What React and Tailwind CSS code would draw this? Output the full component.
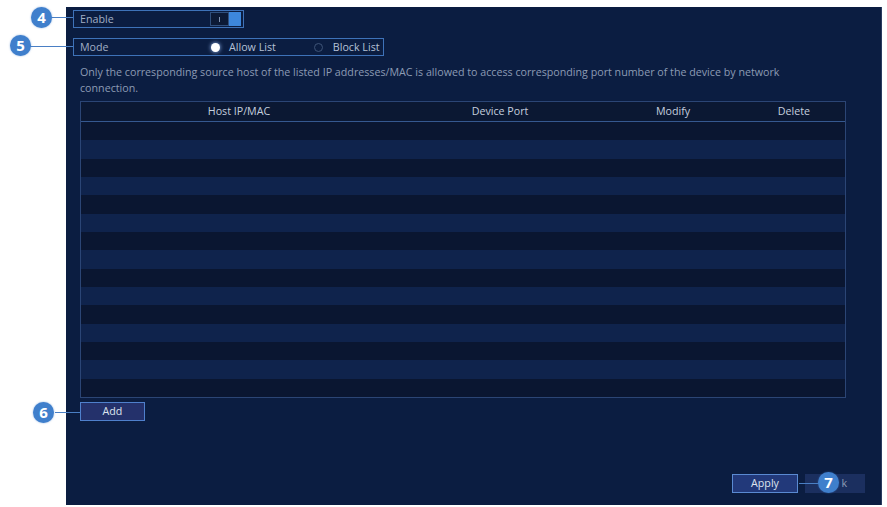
import React from "react";

function Badge({ n, className }) {
  return (
    <div
      className={
        "absolute w-[21px] h-[21px] rounded-full bg-[#3f7fcc] flex items-center justify-center text-white font-bold text-[15px] leading-none shadow-[0_0_2px_rgba(60,120,200,0.6)] " +
        className
      }
      style={{ fontFamily: "'Open Sans', 'Liberation Sans', sans-serif" }}
    >
      {n}
    </div>
  );
}

export default function App() {
  const rows = Array.from({ length: 15 }, (_, i) => i);
  return (
    <div
      className="relative w-[887px] h-[507px] bg-white overflow-hidden pl-[66px] pt-[7px]"
      style={{ fontFamily: "'Open Sans', 'Noto Sans', sans-serif" }}
    >
      <div className="w-[816px] h-[498px] bg-[#0b1d41] flex flex-col pt-[3px] border-r border-[#2a3c60]">
        {/* Enable row */}
        <div className="ml-[7px] w-[171px] h-[18px] border border-[#3e72b8] flex items-center pl-[6px] text-[10.7px] text-[#a0aec4]">
          <span className="flex-1">Enable</span>
          <div className="flex items-center h-[14px] mr-[2px]">
            <div className="w-[19px] h-[14px] bg-[#0c1a36] border border-[#30507e] flex items-center justify-center">
              <div className="w-[1px] h-[5px] bg-[#7d8fae]" />
            </div>
            <div className="w-[12px] h-[14px] bg-[#3d87dc]" />
          </div>
        </div>

        {/* Mode row */}
        <div className="ml-[7px] mt-[10px] w-[311px] h-[18px] border border-[#3e72b8] flex items-center pl-[6px] text-[10.7px]">
          <span className="w-[131px] text-[#a0aec4]">Mode</span>
          <div className="w-[9px] h-[9px] rounded-full bg-white shadow-[0_0_4px_#9cc3ff]" />
          <span className="ml-[9px] text-[#b4c1d6]">Allow List</span>
          <div className="ml-[38px] w-[9px] h-[9px] rounded-full border border-[#3e5478]" />
          <span className="ml-[10px] text-[#b4c1d6]">Block List</span>
        </div>

        {/* Description */}
        <div className="ml-[14px] mt-[8px] text-[10.7px] leading-[16px] text-[#8c9bb4] whitespace-nowrap">
          Only the corresponding source host of the listed IP addresses/MAC is allowed to access corresponding port number of the device by network
          <br />
          connection.
        </div>

        {/* Table */}
        <div className="ml-[14px] mt-[5px] w-[766px] h-[297px] border border-[#2b4575] flex flex-col">
          <div className="h-[20px] shrink-0 bg-[#0b1833] border-b border-[#35588f] flex items-center text-[10.7px] text-[#c4cede]">
            <div className="w-[316px] text-center">Host IP/MAC</div>
            <div className="w-[206px] text-center">Device Port</div>
            <div className="w-[140px] text-center">Modify</div>
            <div className="flex-1 text-center">Delete</div>
          </div>
          <div className="flex-1 flex flex-col">
            {rows.map((i) => (
              <div
                key={i}
                className={"flex-1 " + (i % 2 === 0 ? "bg-[#0a1631]" : "bg-[#0f234c]")}
              />
            ))}
          </div>
        </div>

        {/* Add */}
        <div className="ml-[14px] mt-[4px] w-[65px] h-[19px] bg-[#24316b] border border-[#4f80cc] flex items-center justify-center text-[10.7px] text-[#dde4ef]">
          Add
        </div>

        {/* Bottom buttons */}
        <div className="mt-auto pb-[12px] flex justify-end gap-[7px] pr-[16px]">
          <div className="w-[66px] h-[19px] bg-[#22397a] border border-[#5a8ad2] flex items-center justify-center text-[10.7px] text-[#dde4ef]">
            Apply
          </div>
          <div className="w-[60px] h-[19px] bg-[#1b2f5f] flex items-center justify-end pr-[18px] text-[10.7px] text-[#8e9db6]">
            k
          </div>
        </div>
      </div>

      {/* Callouts */}
      <div className="absolute left-[51px] top-[17px] w-[22px] h-[1px] bg-[#4a7fc4]" />
      <Badge n="4" className="left-[31px] top-[7px]" />
      <div className="absolute left-[30px] top-[46px] w-[43px] h-[1px] bg-[#4a7fc4]" />
      <Badge n="5" className="left-[10px] top-[35px]" />
      <div className="absolute left-[55px] top-[412px] w-[25px] h-[1px] bg-[#4a7fc4]" />
      <Badge n="6" className="left-[33px] top-[402px]" />
      <div className="absolute left-[799px] top-[483px] w-[21px] h-[1px] bg-[#4a7fc4]" />
      <Badge n="7" className="left-[818px] top-[472px]" />
    </div>
  );
}
